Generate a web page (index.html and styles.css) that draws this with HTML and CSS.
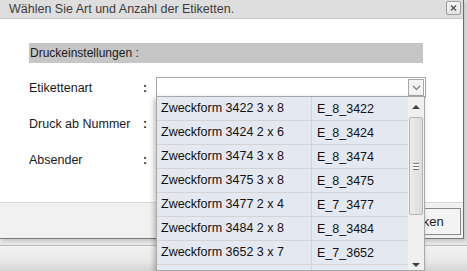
FILE: index.html
```html
<!DOCTYPE html>
<html lang="de">
<head>
<meta charset="utf-8">
<link rel="stylesheet" href="styles.css">
</head>
<body>
<div class="page">
  <div class="dialog">
    <div class="titlebar">
      <span class="title">Wählen Sie Art und Anzahl der Etiketten.</span>
      <span class="close"><svg width="13" height="12" viewBox="0 0 13 12"><path d="M4 3.5 L9 8.5 M9 3.5 L4 8.5" stroke="#555" stroke-width="1.3" fill="none"/></svg></span>
    </div>
    <div class="content">
      <div class="section">Druckeinstellungen :</div>
      <div class="form">
        <div class="row">
          <span class="label">Etikettenart</span><span class="colon">:</span>
          <div class="select"><span class="arrow"><svg width="9" height="6" viewBox="0 0 9 6"><path d="M1 1 L4.5 4.5 L8 1" stroke="#777" stroke-width="1.1" fill="none"/></svg></span></div>
        </div>
        <div class="row">
          <span class="label">Druck ab Nummer</span><span class="colon">:</span>
        </div>
        <div class="row">
          <span class="label">Absender</span><span class="colon">:</span>
        </div>
      </div>
    </div>
    <div class="footer">
      <button class="btn">Drucken</button>
    </div>
  </div>
  <div class="below"></div>

  <div class="dropdown">
    <div class="list">
      <div class="item"><span class="c1">Zweckform 3422 3 x 8</span><span class="c2">E_8_3422</span></div>
      <div class="item"><span class="c1">Zweckform 3424 2 x 6</span><span class="c2">E_8_3424</span></div>
      <div class="item"><span class="c1">Zweckform 3474 3 x 8</span><span class="c2">E_8_3474</span></div>
      <div class="item"><span class="c1">Zweckform 3475 3 x 8</span><span class="c2">E_8_3475</span></div>
      <div class="item"><span class="c1">Zweckform 3477 2 x 4</span><span class="c2">E_7_3477</span></div>
      <div class="item"><span class="c1">Zweckform 3484 2 x 8</span><span class="c2">E_8_3484</span></div>
      <div class="item"><span class="c1">Zweckform 3652 3 x 7</span><span class="c2">E_7_3652</span></div>
      <div class="item rest"><span class="c1"></span><span class="c2"></span></div>
    </div>
    <div class="scrollbar">
      <span class="up"></span>
      <span class="thumb"><span class="grip"></span></span>
      <span class="down"></span>
    </div>
  </div>
</div>
</body>
</html>
```

FILE: styles.css
```css
html, body {
  margin: 0;
  padding: 0;
}
body {
  width: 467px;
  height: 271px;
  overflow: hidden;
  background: #e6e6e6;
  font-family: "Liberation Sans", Arial, sans-serif;
  font-size: 12px;
  color: #1a1a1a;
}
.page {
  position: relative;
  width: 467px;
  height: 271px;
  display: flex;
  flex-direction: column;
  overflow: hidden;
}
.dialog {
  width: 463px;
  height: 238px;
  border-right: 1px solid #6e6e6e;
  border-bottom: 1px solid #7a7a7a;
  display: flex;
  flex-direction: column;
  background: #fff;
  box-shadow: 2px 2px 3px rgba(0,0,0,0.15);
}
.titlebar {
  height: 18px;
  background: #dedede;
  border-bottom: 1px solid #c8c8c8;
  display: flex;
  align-items: center;
  justify-content: space-between;
  padding: 0 2px 0 9px;
}
.title {
  color: #3c3c3c;
  font-size: 12.5px;
  line-height: 18px;
  margin-top: -1px;
}
.close {
  width: 13px;
  height: 12px;
  border: 1px solid #9c9c9c;
  border-radius: 2px;
  background: linear-gradient(#f6f6f6, #e2e2e2);
  display: flex;
  margin-top: -2px;
}
.content {
  flex: 1;
  padding: 24px 0 0 29px;
  background: #fff;
}
.section {
  width: 393px;
  height: 20px;
  line-height: 20px;
  background: #c6c6c6;
  padding-left: 1px;
  margin-bottom: 14px;
}
.form {
  display: flex;
  flex-direction: column;
  gap: 15px;
}
.row {
  display: flex;
  align-items: center;
  height: 21px;
}
.label {
  width: 114px;
  font-size: 12.5px;
}
.colon {
  width: 13px;
  font-weight: bold;
}
.select {
  width: 267px;
  height: 19px;
  border: 1px solid #a6a6a6;
  background: #fff;
  display: flex;
  justify-content: flex-end;
  align-items: center;
  padding-right: 1px;
}
.arrow {
  width: 14px;
  height: 15px;
  border: 1px solid #a8a8a8;
  background: #f4f4f4;
  display: flex;
  align-items: center;
  justify-content: center;
}
.footer {
  height: 36px;
  border-top: 1px solid #d8d8d8;
  background: #f1f1f1;
  display: flex;
  justify-content: flex-end;
  align-items: flex-start;
  padding: 5px 2px 0 0;
  box-sizing: border-box;
}
.btn {
  width: 83px;
  height: 27px;
  border: 1px solid #8a8a8a;
  background: #f4f4f4;
  font-family: "Liberation Sans", Arial, sans-serif;
  font-size: 13px;
  color: #1a1a1a;
  padding: 0;
}
.below {
  flex: 1;
  border-top: 1px solid #bdbdbd;
  margin-top: 6px;
  background: linear-gradient(#f2f2f2, #e8e8e8 60%, #d4d4d4);
}
.dropdown {
  position: absolute;
  left: 156px;
  top: 96px;
  width: 267px;
  height: 173px;
  border: 1px solid #a8a8a8;
  background: #f0f0f0;
  display: flex;
  box-shadow: -2px 2px 5px rgba(0,0,0,0.25);
  overflow: hidden;
}
.list {
  width: 251px;
  display: flex;
  flex-direction: column;
  overflow: hidden;
}
.item {
  height: 23px;
  border-bottom: 1px solid #d4d4d4;
  background: #e4e8f0;
  display: flex;
  align-items: center;
  flex: none;
  font-size: 12.5px;
  color: #111;
}
.item.rest {
  flex: 1;
  border-bottom: 0;
  align-items: stretch;
}
.c1 {
  width: 155px;
  box-sizing: border-box;
  padding-left: 4px;
  border-right: 1px solid #d4d4d4;
  line-height: 23px;
}
.c2 {
  padding-left: 5px;
}
.scrollbar {
  width: 16px;
  background: #f0f0f0;
  display: flex;
  flex-direction: column;
  align-items: center;
}
.up {
  margin-top: 8px;
  width: 0;
  height: 0;
  border-left: 4px solid transparent;
  border-right: 4px solid transparent;
  border-bottom: 4px solid #404040;
}
.thumb {
  margin-top: 8px;
  width: 12px;
  height: 96px;
  border: 1px solid #b4b4b4;
  border-radius: 2px;
  background: linear-gradient(90deg, #ececec, #dcdcdc);
  display: flex;
  align-items: center;
  justify-content: center;
}
.grip {
  width: 6px;
  height: 5px;
  border-top: 1px solid #777;
  border-bottom: 1px solid #777;
  background: linear-gradient(#fff 0, #fff 2px, #777 2px, #777 3px, #fff 3px);
}
.down {
  margin-top: auto;
  margin-bottom: 3px;
  width: 0;
  height: 0;
  border-left: 4px solid transparent;
  border-right: 4px solid transparent;
  border-top: 4px solid #404040;
}
```
